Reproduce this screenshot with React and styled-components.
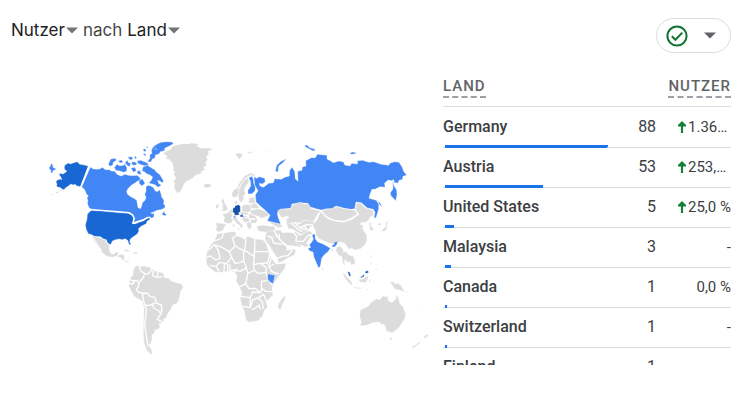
import React from 'react'
import styled, { createGlobalStyle } from 'styled-components'


const rows = [
    { country: 'Germany', users: 88, change: '1.36…', up: true },
    { country: 'Austria', users: 53, change: '253,…', up: true },
    { country: 'United States', users: 5, change: '25,0 %', up: true },
    { country: 'Malaysia', users: 3, change: '-' },
    { country: 'Canada', users: 1, change: '0,0 %' },
    { country: 'Switzerland', users: 1, change: '-' },
    { country: 'Finland', users: 1, change: '-' },
]

const maxUsers = 88

function Caret() {
    return (
        <svg width="12" height="7" viewBox="0 0 12 7" aria-hidden="true">
            <path d="M0 0.5H12L6 6.5Z" fill="currentColor" />
        </svg>
    )
}

function UpArrow() {
    return (
        <svg width="8" height="12" viewBox="0 0 8 12" aria-hidden="true">
            <path d="M4 0L8 4V5.4H5.1V12H2.9V5.4H0V4Z" fill="#188038" />
        </svg>
    )
}

function WorldMap() {
    return (
        <MapSvg viewBox="45 135 385 225" role="img" aria-label="Nutzer nach Land">
            {/* North America */}
            <g transform="translate(45 135) scale(.33333)">
                <Land $fill="#1967d2" d="M59 91L70 84L76 87L84 84L97 80L104 88L118 90L131 94L107 155L96 153L90 148L84 150L78 147L70 153L62 158L57 164L50 162L47 158L40 157L34 153L36 148L33 140L37 135L46 132L51 134L47 125L43 120L44 115L54 117L62 112L66 108L59 104L58 97Z" />
                <Land $fill="#1967d2" d="M16 179L23 176L22 178ZM32 174L39 170L38 173ZM42 169L51 165L47 168Z" />
                <Land $fill="#4285f4" d="M12 97L15 96L18 86L22 87L25 98L33 101L31 105L25 106L21 115L17 112L18 106L13 102Z" />
                <Land $fill="#4285f4" d="M136 96L145 102L158 103L166 101L172 97L181 104L194 104L198 108L210 109L214 116L222 121L229 123L240 118L250 121L262 122L276 121L284 127L287 136L278 138L270 144L260 150L250 160L245 168L247 177L255 184L266 190L275 195L277 206L279 218L286 221L290 214L292 203L300 196L303 187L299 178L303 168L303 155L309 151L317 153L326 158L330 167L337 170L344 164L348 176L350 186L357 196L356 207L361 213L358 220L347 224L336 226L328 230L317 234L322 236L327 235L327 246L319 250L315 245L306 247L296 253L278 258L268 262L263 266L268 252L264 240L252 232L238 232L210 230L170 227L136 222L131 216L127 204L129 198L126 188L130 184L124 176L119 164L110 156Z" />
                <Land $fill="#4285f4" d="M190 88L197 72L210 70L215 75L205 82L203 91L195 94ZM208 97L216 88L224 92L236 91L239 86L246 98L245 109L236 112L224 108L212 106ZM219 78L229 75L235 81L226 84ZM240 83L247 76L251 83L258 85L253 95L246 91ZM259 82L268 80L277 86L270 91L262 90ZM248 66L261 65L264 72L256 75ZM268 62L276 68L270 73ZM258 99L270 97L274 107L265 112ZM276 77L287 76L306 83L312 91L298 92L289 89L280 86ZM294 43L301 41L304 48L297 50ZM303 34L309 36L307 41ZM294 55L304 58L300 64ZM275 110L285 106L289 119L279 117ZM282 138L292 131L300 145L291 153L283 146Z" />
                <Land $fill="#4285f4" d="M294 96L307 91L320 99L329 104L335 112L345 119L350 128L356 138L352 143L344 138L338 136L341 145L349 151L339 157L330 149L321 147L311 144L319 136L323 126L315 120L305 116L298 110L291 107Z" />
                <Land $fill="#4285f4" d="M307 80L315 70L314 60L321 55L319 45L325 35L338 26L348 22L365 20L382 21L385 26L372 34L360 39L358 47L346 50L342 57L331 60L330 69L322 72L318 81ZM322 38L331 28L329 36L336 43L329 45ZM351 237L357 229L360 236L365 238L361 242L352 240Z" />
                <Land $fill="#1967d2" d="M140 226L180 229L210 232L250 235L260 240L266 248L262 266L272 266L282 262L296 257L304 251L312 248L316 252L306 259L304 266L296 270L288 274L280 282L282 288L276 298L267 304L256 312L254 320L259 330L252 328L248 316L240 311L232 314L222 312L212 314L202 318L197 329L188 324L184 314L176 312L166 305L148 304L140 299L130 296L124 284L121 270L126 252L127 238L134 230Z" />
                <Line d="M131 94L107 157M132 222L140 224L180 227L210 229L252 233L263 240L268 250L264 265L280 260L297 254L308 247" />
                <Land d="M140 303L152 306L166 308L174 312L182 316L186 326L194 330L192 342L197 355L206 358L212 352L221 351L219 358L213 364L206 366L196 366L184 362L170 352L168 342L160 333L153 320L148 312L154 328L148 321L146 311ZM221 360L230 358L240 362L236 368L241 376L233 374L228 368L217 366ZM237 375L245 378L253 377L250 382L240 380Z" />
                <Land d="M234 344L247 344L258 350L249 350L238 347ZM263 352L276 352L277 357L267 357Z" />
            </g>

            {/* South America */}
            <g transform="translate(90 235) scale(.33333)">
                <Land d="M134 96L144 90L148 95L160 93L184 98L190 106L204 110L219 114L224 128L236 130L244 138L262 144L276 148L279 158L272 168L268 190L262 204L248 211L243 222L232 238L229 249L221 252L221 263L207 266L210 277L205 282L194 286L193 294L184 302L187 310L183 322L177 330L186 348L185 360L170 346L161 320L160 280L162 218L157 198L143 191L132 183L124 169L116 153L120 130L128 122L130 106Z" />
                <Line d="M148 95L152 108L164 115L160 128L153 135L146 145M184 98L182 109L174 117L163 116M190 106L188 122L202 127L217 125M204 110L202 126M118 133L129 138L139 136L147 142L145 156L139 163L144 171L157 174L160 194L165 211L179 211L188 207L191 219L207 228L213 236L202 253L221 263M157 174L173 175L180 184L194 187L200 205L214 210L216 230L208 234M188 207L196 203M165 211L169 221L167 248L164 270L170 310L174 335M116 145L128 147L136 137" />
            </g>

            {/* Greenland and Europe */}
            <g transform="translate(160 135) scale(.33333)">
                <Land d="M9 55L20 48L34 43L34 36L50 30L70 26L84 27L95 24L115 27L112 34L124 40L145 39L160 41L143 50L147 56L139 65L143 74L136 83L140 90L131 97L135 105L122 110L126 115L108 120L97 130L80 139L72 146L68 158L60 171L52 174L45 165L42 153L45 146L40 139L47 132L46 124L40 119L45 112L40 107L40 94L37 83L28 74L16 70L22 64Z" />
                <Land d="M131 151L135 147L151 147L154 153L142 159L133 156ZM226 58L235 54L249 57L244 66L238 74L235 68L230 64ZM262 54L274 49L278 52L266 56ZM317 44L326 45L318 48Z" />
                <Land d="M218 187L215 176L222 164L232 160L236 148L248 130L258 120L272 114L285 119L284 124L272 121L258 128L250 136L242 148L236 160L236 174L230 186Z" />
                <Land d="M235 187L237 164L244 148L252 136L263 128L267 140L260 150L254 160L253 168L257 176L250 183L252 190L244 202L238 198Z" />
                <Land $fill="#4285f4" d="M266 128L276 124L280 132L281 144L286 158L285 168L276 176L264 177L264 166L272 154L272 140Z" />
                <Land d="M186 194L192 192L193 202L198 211L204 220L200 227L184 229L190 220L186 214L190 208L184 202ZM168 210L177 206L175 218L168 221Z" />
                <Land d="M186 238L199 235L207 230L218 240L214 248L218 261L208 266L196 262L191 260L194 246ZM168 264L185 265L200 269L193 275L190 285L176 291L168 286L170 275ZM205 230L216 222L218 236Z" />
                <Land d="M218 250L232 248L233 255L242 265L249 272L244 281L240 272L228 263L225 256L217 256ZM230 280L240 281L237 286ZM219 266L223 267L222 277L218 275ZM224 201L231 196L232 207L224 208Z" />
                <Land d="M246 213L258 208L271 211L273 226L264 233L246 228ZM267 190L283 186L286 204L266 205ZM272 208L287 205L296 215L294 221L274 220ZM272 226L295 222L309 226L327 235L325 242L306 250L295 244L282 240L272 235Z" />
                <Land d="M240 232L250 230L265 235L275 239L286 243L292 254L288 264L274 264L275 274L269 285L263 276L258 264L247 254L248 243Z" />
                <Line d="M249 240L264 242L268 252L286 252M265 235L265 244L256 250M268 252L272 264M258 264L266 261" />
                <Land $fill="#174ea6" d="M219 219L225 217L225 212L236 209L241 214L241 230L235 234L239 240L222 241L224 235L218 231Z" />
                <Land $fill="#174ea6" d="M241 239L249 239L249 246L241 246Z" />
                <Land $fill="#4285f4" d="M220 244L227 244L228 248L220 248Z" />
                <Land d="M289 276L297 272L310 270L330 274L342 273L347 284L334 289L316 291L296 289ZM330 258L358 265L368 274L356 279L346 273L334 266Z" />
            </g>

            {/* Africa and the Middle East */}
            <g transform="translate(200 195) scale(.33333)">
                <Land d="M52 116L70 115L92 110L108 111L108 122L122 126L135 133L143 124L165 132L188 134L198 145L204 162L207 179L214 190L228 207L242 207L259 204L252 224L236 243L224 260L218 272L216 280L219 300L207 312L199 320L202 337L193 346L188 362L174 377L148 382L138 376L134 352L125 330L121 312L126 294L116 270L108 258L112 244L103 230L88 228L66 232L46 231L30 220L20 208L18 184L23 166L34 148L44 137Z" />
                <Line d="M44 138L66 129L70 115M108 122L97 129L105 153L88 170L66 157L43 149L25 166M43 149L55 166L60 190L48 195L31 183L19 187M88 170L95 187L80 206L58 202L48 214L30 211M105 153L131 167L131 199L106 206L95 187M138 132L134 166L163 184L165 133M163 170L205 170M163 184L160 209L181 205L202 204L209 181M131 199L140 218L121 229L105 225L91 227L89 207M160 209L163 226L144 234L136 216M181 205L199 217L198 232L174 235L163 226M214 190L206 210L214 229L236 237M198 232L203 251L217 270M201 257L185 259L184 280L198 289L218 290M144 234L137 266L121 275M137 266L147 281L165 280L181 293L187 279M121 304L151 308L158 291L181 293M151 308L150 338L128 334M151 338L158 315L174 309L187 320L190 342M174 309L191 298L200 320M154 344L166 340L178 330L181 344M48 214L58 229M73 206L72 231M82 207L84 229M205 216L222 207M103 230L112 221" />
                <Land d="M234 340L235 326L244 314L254 301L256 310L249 325L241 344Z" />
                <Land $fill="#4285f4" d="M203 236L215 239L225 241L222 254L219 266L210 261L203 252Z" />
                <Land d="M200 121L215 118L225 119L238 134L248 146L258 154L263 164L279 162L288 166L282 181L263 189L251 197L236 204L232 190L219 170L209 153L198 139Z" />
                <Land d="M200 108L222 108L228 123L219 125L204 137L196 138L196 123ZM224 106L240 105L250 114L264 111L288 111L300 124L298 142L303 157L280 153L262 151L245 137L235 125Z" />
                <Line d="M202 123L216 128L220 144L247 148M231 190L246 184L264 182L278 164M258 164L274 163M238 116L238 130" />
            </g>

            {/* Russia and Asia */}
            <g transform="translate(280 140) scale(.33333)">
                <Land $fill="#4285f4" d="M-78 110L-70 115L-62 110L-46 115L-44 125L-53 132L-62 130L-60 138L-50 142L-43 137L-34 130L-20 128L-16 116L4 118L14 112L28 108L29 91L36 82L44 94L46 116L54 124L53 94L66 91L67 81L78 78L77 62L94 53L106 53L112 43L141 46L141 57L152 63L160 68L177 63L191 66L194 75L210 78L215 70L232 72L233 62L248 61L267 67L281 65L304 73L326 76L331 69L344 65L357 67L366 80L371 94L380 106L369 109L367 119L358 120L354 129L343 128L341 119L334 122L325 120L314 129L315 142L300 140L285 148L276 148L270 163L267 175L278 178L289 181L296 193L296 208L291 224L288 233L282 234L285 217L280 208L262 204L244 188L228 186L224 206L212 208L190 204L168 198L156 206L140 206L124 210L108 206L88 200L84 190L60 188L36 192L32 205L0 208L-8 218L-6 231L2 252L-20 247L-38 243L-30 225L-42 213L-60 197L-72 185L-74 165L-66 152L-76 135Z" />
                <Land $fill="#4285f4" d="M338 121L342 138L350 149L351 164L347 183L342 176L333 168L331 158L339 147ZM-14 94L-10 76L3 64L20 56L8 69L-4 78L-6 96ZM73 19L80 14L89 23L97 25L108 30L100 33L84 25ZM210 38L219 36L230 39L223 42L213 43ZM292 182L301 189L306 200L299 194Z" />
                <Land d="M-7 212L6 207L32 208L36 196L52 190L62 187L72 192L86 192L94 206L106 209L123 213L113 221L108 232L101 244L84 243L73 240L61 248L44 247L28 251L17 240L28 232L20 229L4 233Z" />
                <Land d="M17 240L30 251L43 248L60 252L72 241L100 244L104 251L91 261L86 272L76 277L63 283L51 276L37 267L25 266ZM50 286L63 286L78 275L91 273L98 281L91 293L84 302L80 311L88 319L75 320L63 314L50 317L50 302Z" />
                <Line d="M34 250L54 268L67 275M42 247L61 264L77 270M62 262L81 253L98 255M73 255L80 269L92 270M98 283L83 288L70 304L50 304M14 274L42 278L50 290L47 305" />
                <Land d="M124 212L140 208L156 206L170 200L190 206L214 210L232 210L234 222L214 234L192 244L160 240L140 230Z" />
                <Land d="M98 255L111 239L122 215L130 220L140 234L160 242L192 246L216 238L235 223L225 211L228 192L240 188L256 203L268 208L280 210L280 226L270 232L265 242L254 248L246 245L240 253L251 258L247 265L260 285L261 301L255 315L242 326L224 330L216 325L207 328L200 319L196 311L181 305L160 312L141 307L117 296L108 284L106 272Z" />
                <Line d="M111 302L130 311L149 318L153 314L166 313" />
                <Line d="M122 212L140 231L160 241L192 245L215 236L235 222L225 209" />
                <Land $fill="#4285f4" d="M96 284L105 282L106 297L112 305L129 312L144 320L151 325L144 335L133 344L125 355L121 379L116 384L109 369L101 349L99 336L88 332L84 326L92 322L88 314L96 305L100 297ZM155 318L162 313L163 306L173 305L171 313L164 321L157 321Z" />
                <Land d="M170 322L180 318L190 329L190 337L198 334L207 346L218 347L224 358L226 370L214 376L211 365L202 367L195 358L193 369L196 382L189 370L186 350L178 348L168 333ZM151 325L159 328L158 336ZM124 380L132 387L128 391ZM266 248L274 249L272 258L281 267L276 273L270 269L269 258ZM306 270L316 262L318 252L317 243L323 245L321 260L319 270L309 275ZM295 250L304 250L302 256L294 256ZM272 344L276 351L271 354Z" />
            </g>

            {/* South-East Asia and Oceania */}
            <g transform="translate(300 230) scale(.33333)">
                <Land d="M128 130L134 132L143 144L153 154L158 166L152 165L139 149L132 140ZM176 148L190 147L203 135L204 145L197 158L179 156ZM160 171L183 174L183 177L163 174ZM192 176L208 178L202 180ZM208 149L214 149L210 153L211 159L207 157ZM213 97L218 100L214 106ZM226 115L232 118L228 121ZM270 156L281 155L284 162L294 160L304 167L308 176L315 187L300 180L285 178L279 168Z" />
                <Land $fill="#185abc" d="M143 125L149 126L153 139L147 138ZM180 141L188 138L188 134L193 134L192 140L184 143ZM195 128L198 122L205 123L205 129L198 130Z" />
                <Land d="M181 240L192 235L205 229L209 222L221 211L230 206L239 210L248 198L260 200L266 199L263 209L272 217L279 215L287 207L290 194L295 204L300 221L310 232L317 253L314 266L305 280L296 294L284 303L276 308L259 303L257 292L251 281L246 285L239 276L218 278L202 285L180 288L184 275L179 260ZM268 323L278 323L271 332ZM336 350L347 345L360 334L361 338L346 350L337 355ZM371 321L381 312L385 318L374 325Z" />
                <Land d="M345 226L356 237L350 232ZM319 184L326 189L320 188Z" />
            </g>
        </MapSvg>
    )
}

function App() {
    return (
        <Container>
            <GlobalStyle />
            <Header>
                <Title>
                    <TitleButton type="button">Nutzer<Caret /></TitleButton>
                    <span>nach</span>
                    <TitleButton type="button">Land<Caret /></TitleButton>
                </Title>
                <StatusButton type="button" aria-label="Datenqualität">
                    <svg width="22" height="22" viewBox="0 0 22 22" fill="none" stroke="#137333" strokeWidth="2" aria-hidden="true">
                        <circle cx="11" cy="11" r="9.6" />
                        <path d="M5.8 11.2L9.4 14.8L16.3 7.6" />
                    </svg>
                    <Caret />
                </StatusButton>
            </Header>
            <Content>
                <MapPane>
                    <WorldMap />
                </MapPane>
                <TablePane>
                    <Table>
                        <colgroup>
                            <Col $width="57%" />
                            <Col $width="17%" />
                            <Col $width="26%" />
                        </colgroup>
                        <thead>
                            <tr>
                                <HeadCell scope="col"><Label>Land</Label></HeadCell>
                                <HeadCell scope="col" colSpan={2} $right><Label>Nutzer</Label></HeadCell>
                            </tr>
                        </thead>
                        <tbody>
                            {rows.map((row) => (
                                <Row key={row.country}>
                                    <NameCell>
                                        <Name>{row.country}</Name>
                                        <Bar style={{ width: `${(row.users / maxUsers) * 99}%` }} />
                                    </NameCell>
                                    <UsersCell>{row.users}</UsersCell>
                                    <ChangeCell>
                                        <Change>
                                            {row.up && <UpArrow />}
                                            <ChangeValue $up={row.up}>{row.change}</ChangeValue>
                                        </Change>
                                    </ChangeCell>
                                </Row>
                            ))}
                        </tbody>
                    </Table>
                </TablePane>
            </Content>
        </Container>
    )
}

export default App

const GlobalStyle = createGlobalStyle`
    * {
        box-sizing : border-box;
    }
    body {
        margin : 0;
        background : #fff;
        font-family : Roboto, "Liberation Sans", sans-serif;
        color : #3c4043;
    }
    button {
        font : inherit;
        cursor : pointer;
    }
`
const Container = styled.div`
    padding : 18px 20px 0 11px;
`
const Header = styled.header`
    display : flex;
    justify-content : space-between;
    align-items : flex-start;
`
const Title = styled.h1`
    display : flex;
    align-items : center;
    gap : 5px;
    margin : 0;
    font-family : Inter, "Open Sans", sans-serif;
    font-size : 17px;
    line-height : 24px;
    font-weight : 400;
    color : #444746;
`
const TitleButton = styled.button`
    display : flex;
    align-items : center;
    gap : 1px;
    padding : 0;
    border : 0;
    background : none;
    color : #202124;
    svg {
        color : #757575;
    }
`
const StatusButton = styled.button`
    display : flex;
    align-items : center;
    gap : 16px;
    height : 35px;
    padding : 0 14px 0 9px;
    border : 1px solid #dadce0;
    border-radius : 18px;
    background : #fff;
    color : #5f6368;
`
const Content = styled.main`
    display : grid;
    grid-template-columns : 3fr 2fr;
`
const MapPane = styled.section`
    padding : 82px 13px 0 34px;
`
const MapSvg = styled.svg`
    display : block;
    width : 100%;
`
const Land = styled.path`
    fill : ${(props) => props.$fill || '#dcdcdc'};
    stroke : #fff;
    stroke-width : 1;
`
const Line = styled.path`
    fill : none;
    stroke : #fff;
    stroke-width : 4;
    stroke-linejoin : round;
`
const TablePane = styled.section`
    max-height : 312px;
    overflow : hidden;
    padding-top : 23px;
`
const Table = styled.table`
    width : 100%;
    table-layout : fixed;
    border-spacing : 0;
`
const Col = styled.col`
    width : ${(props) => props.$width};
`
const HeadCell = styled.th`
    height : 31px;
    padding : 0;
    border-bottom : 1px solid #dadce0;
    vertical-align : top;
    text-align : ${(props) => (props.$right ? 'right' : 'left')};
`
const Label = styled.span`
    display : inline-block;
    border-bottom : 2px dashed #9aa0a6;
    font-size : 15px;
    line-height : 20px;
    font-weight : 500;
    letter-spacing : 1px;
    text-transform : uppercase;
    color : #5f6368;
`
const Cell = styled.td`
    height : 40px;
    padding : 0;
    border-bottom : 1px solid #dadce0;
    vertical-align : bottom;
    font-size : 16px;
    line-height : 20px;
`
const Row = styled.tr`
    &:first-child td {
        height : 41px;
    }
`
const NameCell = styled(Cell)`
    font-weight : 500;
`
const Name = styled.div`
    padding-bottom : 8px;
`
const Bar = styled.div`
    height : 3px;
    margin : 0 0 -1px 2px;
    background : #1a73e8;
`
const UsersCell = styled(Cell)`
    padding-bottom : 10px;
    text-align : right;
`
const ChangeCell = styled(Cell)`
    padding-bottom : 10px;
    font-size : 15px;
`
const Change = styled.div`
    display : flex;
    justify-content : flex-end;
    align-items : center;
    gap : 2px;
`
const ChangeValue = styled.span`
    min-width : ${(props) => (props.$up ? '43px' : '0')};
`
